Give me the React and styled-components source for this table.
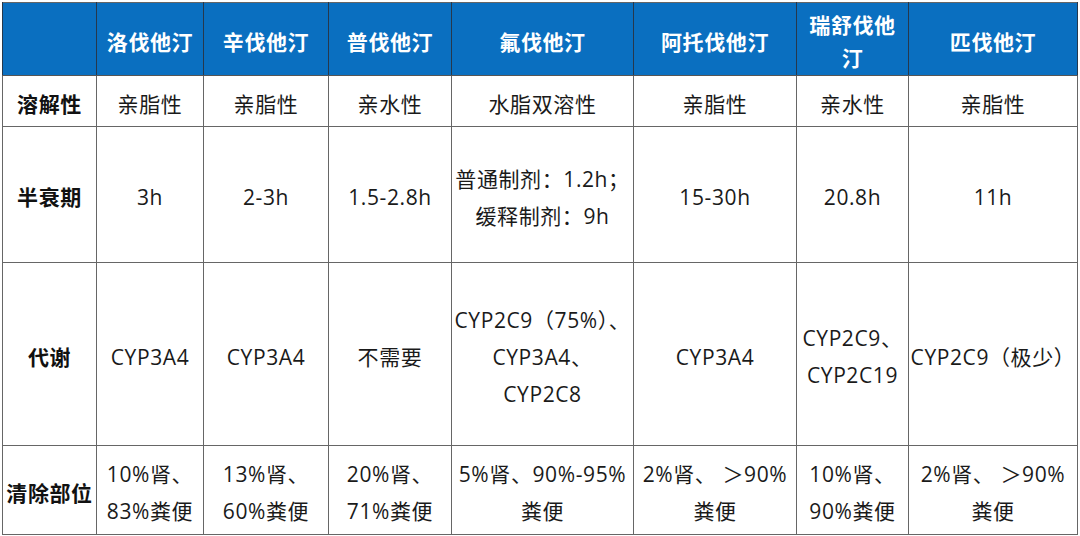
import React from 'react';
import styled, { createGlobalStyle } from 'styled-components';

const GlobalStyle = createGlobalStyle`
  html, body {
    margin: 0;
    padding: 0;
    background: #ffffff;
  }
  body {
    font-family: "Open Sans", "Noto Sans CJK SC", sans-serif;
  }
`;

const Page = styled.div`
  padding: 2px 0 0 2px;
`;

const Table = styled.table`
  width: 1075px;
  table-layout: fixed;
  border-collapse: collapse;
  font-size: 21px;
  line-height: 37px;
  letter-spacing: 0.6px;
  color: #1a1a1a;
  border: 1px solid #666;
`;

const HeadRow = styled.tr`
  height: 72px;
  background: #0a6fc0;
`;

const HeadCell = styled.th`
  color: #ffffff;
  font-weight: 700;
  line-height: 33px;
  text-align: center;
  vertical-align: middle;
  padding: 6px 4px 0;
  border-left: 1px solid #26384c;
  border-right: 1px solid #26384c;
  border-bottom: 1px solid #555;
`;

const Row = styled.tr`
  height: ${p => p.$h}px;
`;

const RowHead = styled.th`
  font-weight: 700;
  color: #111;
  text-align: center;
  vertical-align: middle;
  padding: 6px 0 0;
  border: 1px solid #666;
  white-space: nowrap;
`;

const Cell = styled.td`
  text-align: center;
  vertical-align: middle;
  padding: 6px 0 0;
  border: 1px solid #666;
  white-space: nowrap;
  overflow: visible;
`;

const columns = [94, 107, 125, 123, 182, 163, 112, 169];

const drugs = ['洛伐他汀', '辛伐他汀', '普伐他汀', '氟伐他汀', '阿托伐他汀', ['瑞舒伐他', '汀'], '匹伐他汀'];

const rows = [
  {
    label: '溶解性',
    h: 51,
    cells: ['亲脂性', '亲脂性', '亲水性', '水脂双溶性', '亲脂性', '亲水性', '亲脂性'],
  },
  {
    label: '半衰期',
    h: 136,
    cells: ['3h', '2-3h', '1.5-2.8h', ['普通制剂：1.2h；', '缓释制剂：9h'], '15-30h', '20.8h', '11h'],
  },
  {
    label: '代谢',
    h: 183,
    cells: [
      'CYP3A4',
      'CYP3A4',
      '不需要',
      ['CYP2C9（75%）、', 'CYP3A4、', 'CYP2C8'],
      'CYP3A4',
      ['CYP2C9、', 'CYP2C19'],
      'CYP2C9（极少）',
    ],
  },
  {
    label: '清除部位',
    h: 89,
    cells: [
      ['10%肾、', '83%粪便'],
      ['13%肾、', '60%粪便'],
      ['20%肾、', '71%粪便'],
      ['5%肾、90%-95%', '粪便'],
      ['2%肾、 ＞90%', '粪便'],
      ['10%肾、', '90%粪便'],
      ['2%肾、 ＞90%', '粪便'],
    ],
  },
];

function Lines({ value }) {
  if (!Array.isArray(value)) return value;
  return value.map((line, i) => (
    <React.Fragment key={i}>
      {i > 0 && <br />}
      {line}
    </React.Fragment>
  ));
}

export default function App() {
  return (
    <Page>
      <GlobalStyle />
      <Table>
        <colgroup>
          {columns.map((w, i) => (
            <col key={i} style={{ width: w }} />
          ))}
        </colgroup>
        <thead>
          <HeadRow>
            <HeadCell />
            {drugs.map((d, i) => (
              <HeadCell key={i}>
                <Lines value={d} />
              </HeadCell>
            ))}
          </HeadRow>
        </thead>
        <tbody>
          {rows.map(row => (
            <Row key={row.label} $h={row.h}>
              <RowHead>{row.label}</RowHead>
              {row.cells.map((c, i) => (
                <Cell key={i}>
                  <Lines value={c} />
                </Cell>
              ))}
            </Row>
          ))}
        </tbody>
      </Table>
    </Page>
  );
}
